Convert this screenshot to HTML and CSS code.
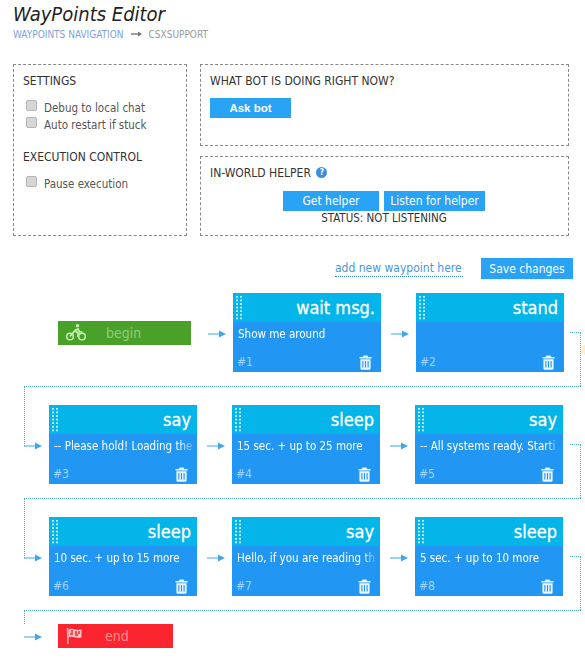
FILE: index.html
```html
<!DOCTYPE html>
<html lang="en">
<head>
    <meta charset="UTF-8">
    <title>WayPoints Editor</title>
    <link rel="stylesheet" href="styles.css">
</head>
<body>
    <svg class="defs" width="0" height="0">
        <symbol id="trash" viewBox="0 0 14 16">
            <path d="M5 0.500h4l1 1.500h3.500v1.800h-13v-1.800h3.500z" fill="currentColor"/>
            <path d="M1.500 4.500h11v10a1.200 1.200 0 0 1-1.200 1.200h-8.600a1.200 1.200 0 0 1-1.200-1.200z" fill="currentColor"/>
            <path d="M4.200 6.500v7M7 6.500v7M9.800 6.500v7" stroke="#2196f3" stroke-width="1.200"/>
        </symbol>
        <symbol id="arr" viewBox="0 0 18 8">
            <path d="M0 4h13" stroke="#7cc4ee" stroke-width="1.500"/>
            <path d="M11 0.500l7 3.500-7 3.500z" fill="#45a8e6"/>
        </symbol>
    </svg>

    <h1 class="title">WayPoints Editor</h1>
    <div class="crumbs">
        <a class="crumb-link">WAYPOINTS NAVIGATION</a>
        <svg class="crumb-arrow" width="11" height="6" viewBox="0 0 11 6"><path d="M0 3h8" stroke="#777" stroke-width="1.400"/><path d="M7 0.500l4 2.500-4 2.500z" fill="#777"/></svg>
        <span>CSXSUPPORT</span>
    </div>

    <div class="panels">
        <div class="panel panel-left">
            <h3>SETTINGS</h3>
            <label class="check"><input type="checkbox"> Debug to local chat</label>
            <label class="check"><input type="checkbox"> Auto restart if stuck</label>
            <h3 class="second">EXECUTION CONTROL</h3>
            <label class="check"><input type="checkbox"> Pause execution</label>
        </div>
        <div class="panel-col">
            <div class="panel panel-ask">
                <h3>WHAT BOT IS DOING RIGHT NOW?</h3>
                <button class="btn btn-ask">Ask bot</button>
            </div>
            <div class="panel panel-helper">
                <h3>IN-WORLD HELPER <span class="help">?</span></h3>
                <div class="helper-btns">
                    <button class="btn btn-get">Get helper</button>
                    <button class="btn btn-listen">Listen for helper</button>
                </div>
                <div class="status">STATUS: NOT LISTENING</div>
            </div>
        </div>
    </div>

    <div class="toolbar">
        <a class="add-link">add new waypoint here</a>
        <button class="btn btn-save">Save changes</button>
    </div>

    <div class="flow">
        <div class="row row-first">
            <div class="cap cap-begin">
                <svg class="cap-icon" width="20" height="17" viewBox="0 0 20 17" fill="none" stroke="#c5f0b0">
                    <circle cx="4" cy="12.500" r="3.300" stroke-width="1.500"/>
                    <circle cx="16" cy="12.500" r="3.300" stroke-width="1.500"/>
                    <circle cx="11.500" cy="1.800" r="1.700" fill="#c5f0b0" stroke="none"/>
                    <path d="M4 12.500l5-6 3-1.500 1.500 3h3M9 6.500l3 2.500v4" stroke-width="1.700"/>
                </svg>
                <span class="cap-text">begin</span>
            </div>
            <svg class="arrow" width="18" height="8"><use href="#arr"/></svg>
            <div class="node">
                <div class="node-head"><span class="grip"></span>wait msg.</div>
                <div class="node-body">Show me around</div>
                <div class="node-foot"><span>#1</span><svg class="trash" width="13" height="15"><use href="#trash"/></svg></div>
            </div>
            <svg class="arrow" width="18" height="8"><use href="#arr"/></svg>
            <div class="node">
                <div class="node-head"><span class="grip"></span>stand</div>
                <div class="node-body"></div>
                <div class="node-foot"><span>#2</span><svg class="trash" width="13" height="15"><use href="#trash"/></svg></div>
            </div>
            <span class="exit"></span>
            <span class="glow"></span>
        </div>

        <div class="row">
            <span class="turn"></span>
            <svg class="arrow" width="18" height="8"><use href="#arr"/></svg>
            <div class="node">
                <div class="node-head"><span class="grip"></span>say</div>
                <div class="node-body">-- Please hold! Loading the</div>
                <div class="node-foot"><span>#3</span><svg class="trash" width="13" height="15"><use href="#trash"/></svg></div>
            </div>
            <svg class="arrow" width="18" height="8"><use href="#arr"/></svg>
            <div class="node">
                <div class="node-head"><span class="grip"></span>sleep</div>
                <div class="node-body">15 sec. + up to 25 more</div>
                <div class="node-foot"><span>#4</span><svg class="trash" width="13" height="15"><use href="#trash"/></svg></div>
            </div>
            <svg class="arrow" width="18" height="8"><use href="#arr"/></svg>
            <div class="node">
                <div class="node-head"><span class="grip"></span>say</div>
                <div class="node-body">-- All systems ready. Starti</div>
                <div class="node-foot"><span>#5</span><svg class="trash" width="13" height="15"><use href="#trash"/></svg></div>
            </div>
            <span class="exit"></span>
        </div>

        <div class="row">
            <span class="turn"></span>
            <svg class="arrow" width="18" height="8"><use href="#arr"/></svg>
            <div class="node">
                <div class="node-head"><span class="grip"></span>sleep</div>
                <div class="node-body">10 sec. + up to 15 more</div>
                <div class="node-foot"><span>#6</span><svg class="trash" width="13" height="15"><use href="#trash"/></svg></div>
            </div>
            <svg class="arrow" width="18" height="8"><use href="#arr"/></svg>
            <div class="node">
                <div class="node-head"><span class="grip"></span>say</div>
                <div class="node-body">Hello, if you are reading th</div>
                <div class="node-foot"><span>#7</span><svg class="trash" width="13" height="15"><use href="#trash"/></svg></div>
            </div>
            <svg class="arrow" width="18" height="8"><use href="#arr"/></svg>
            <div class="node">
                <div class="node-head"><span class="grip"></span>sleep</div>
                <div class="node-body">5 sec. + up to 10 more</div>
                <div class="node-foot"><span>#8</span><svg class="trash" width="13" height="15"><use href="#trash"/></svg></div>
            </div>
            <span class="exit"></span>
        </div>

        <div class="row row-end">
            <span class="turn turn-end"></span>
            <svg class="arrow" width="18" height="8"><use href="#arr"/></svg>
            <div class="cap cap-end">
                <svg class="cap-icon" width="18" height="18" viewBox="0 0 18 18">
                    <path d="M1.500 1l0.500 16" stroke="#ffb3b6" stroke-width="1.500"/>
                    <path d="M2.500 2.500c4-2 6 1.500 13 0v8c-6 1.500-9-2-13 0z" fill="#ffc4c6"/>
                    <path d="M6 3v3M10 4v3M13 4v3M4 7h3M9 8h3" stroke="#fb2530" stroke-width="1.500"/>
                </svg>
                <span class="cap-text">end</span>
            </div>
        </div>
    </div>
</body>
</html>
```

FILE: styles.css
```css
body{
    margin: 0;
    padding: 0 12px 0 13px;
    width: 560px;
    font-family: "DejaVu Sans Condensed", "DejaVu Sans", sans-serif;
    font-size: 12px;
    color: #444;
    background-color: #fff;
}
.defs{
    position: absolute;
}
.title{
    margin: 0;
    padding-top: 2px;
    font-size: 20px;
    line-height: 25px;
    font-weight: normal;
    font-style: italic;
    color: #222;
}
.crumbs{
    display: flex;
    align-items: center;
    gap: 7px;
    height: 14px;
    font-size: 10px;
    color: #999;
}
.crumb-link{
    color: #7d9fdc;
}

/* top panels */
.panels{
    display: flex;
    gap: 13px;
    margin-top: 23px;
}
.panel{
    border: 1px dashed #888;
    box-sizing: border-box;
    padding: 9px;
}
.panel h3{
    margin: 0;
    font-size: 12px;
    line-height: 15px;
    font-weight: normal;
    color: #333;
}
.panel-left{
    width: 174px;
    height: 172px;
}
.panel-left h3{
    margin-bottom: 10px;
}
.panel-left .second{
    margin-top: 17px;
}
.panel-col{
    display: flex;
    flex-direction: column;
    gap: 10px;
    width: 369px;
}
.panel-ask{
    height: 82px;
}
.panel-helper{
    height: 80px;
}
.check{
    display: flex;
    align-items: center;
    gap: 7px;
    height: 17px;
    padding-left: 3px;
    font-size: 11.5px;
    color: #555;
}
.check input{
    appearance: none;
    box-sizing: border-box;
    width: 11px;
    height: 11px;
    margin: 0;
    position: relative;
    top: -2px;
    border: 1px solid #b5b5b5;
    border-radius: 2px;
    background-color: #d6d6d6;
}
.btn{
    border: 0;
    padding: 0;
    height: 20px;
    background-color: #29a3f5;
    color: #fff;
    font-family: "DejaVu Sans Condensed", "DejaVu Sans", sans-serif;
    font-size: 12px;
}
.btn-ask{
    display: block;
    width: 81px;
    margin-top: 9px;
    font-family: "Liberation Sans", sans-serif;
    font-size: 11.5px;
    font-weight: bold;
}
.help{
    display: inline-block;
    width: 11px;
    height: 11px;
    margin-left: 2px;
    border-radius: 50%;
    background-color: #3d8fdc;
    color: #fff;
    font-size: 8px;
    font-weight: bold;
    line-height: 11px;
    text-align: center;
    vertical-align: 2px;
}
.helper-btns{
    display: flex;
    justify-content: center;
    gap: 5px;
    margin-top: 10px;
    padding-right: 1px;
}
.btn-get{
    width: 96px;
}
.btn-listen{
    width: 101px;
}
.status{
    padding-right: 1px;
    font-size: 11.5px;
    line-height: 15px;
    text-align: center;
    color: #333;
}

/* toolbar */
.toolbar{
    display: flex;
    justify-content: flex-end;
    align-items: center;
    gap: 18px;
    margin-top: 22px;
    height: 21px;
}
.add-link{
    border-bottom: 1px dotted #2b7fc9;
    padding-bottom: 1px;
    width: 128px;
    color: #4a96dc;
}
.btn-save{
    width: 92px;
    height: 21px;
}

/* flow */
.flow{
    margin-top: 14px;
}
.row{
    position: relative;
    display: flex;
    align-items: center;
    height: 79px;
    margin: 0 0 33px 11px;
}
.row-first{
    margin-left: 45px;
}
.row-end{
    height: 24px;
    margin-top: -5px;
    margin-bottom: 0;
}
.cap{
    display: flex;
    align-items: center;
    flex: none;
    height: 24px;
    box-sizing: border-box;
    padding-left: 8px;
    font-size: 14px;
}
.cap-begin{
    width: 133px;
    margin-right: 7px;
    background-color: #4aa12a;
}
.cap-begin .cap-text{
    margin-left: 20px;
    color: #8fcf7a;
}
.cap-end{
    width: 115px;
    margin-left: 9px;
    background-color: #fb2530;
}
.cap-end .cap-text{
    margin-left: 21px;
    color: #ff8d8f;
}
.arrow{
    flex: none;
    margin: 2px 7px 0 10px;
}
.turn + .arrow{
    margin-left: 0;
}
.node{
    flex: none;
    width: 148px;
    height: 79px;
    overflow: hidden;
    background-color: #2196f3;
    color: #fff;
}
.node-head{
    position: relative;
    height: 29px;
    padding-right: 6px;
    background-color: #03b5e8;
    font-size: 18px;
    line-height: 30px;
    text-align: right;
    -webkit-text-stroke: 0.3px #fff;
}
.grip{
    position: absolute;
    left: 2px;
    top: 2px;
    width: 8px;
    height: 25px;
    background-image: radial-gradient(circle, #c4f1fd 1.2px, transparent 1.400px);
    background-size: 4px 3.600px;
}
.node-body{
    height: 30px;
    padding: 4px 0 0 5px;
    box-sizing: border-box;
    white-space: nowrap;
    overflow: hidden;
    font-size: 11.5px;
    line-height: 16px;
    -webkit-mask-image: linear-gradient(to right, #000 88%, transparent 100%);
    mask-image: linear-gradient(to right, #000 88%, transparent 100%);
}
.node-foot{
    display: flex;
    justify-content: space-between;
    align-items: center;
    padding: 0 9px 0 4px;
    height: 20px;
    color: #a0d5f9;
    font-size: 12px;
}
.trash{
    color: #eaf6ff;
}

/* dotted connectors between rows */
.exit{
    position: absolute;
    top: 39px;
    left: 546px;
    width: 10px;
    height: 53px;
    border-top: 1px dotted #4aa3d8;
    border-right: 1px dotted #4aa3d8;
}
.row-first .exit{
    left: 512px;
}
.turn{
    position: absolute;
    top: -19px;
    left: 0;
    width: 556px;
    height: 59px;
    border-top: 1px dotted #4aa3d8;
    border-left: 1px dotted #4aa3d8;
}
.turn-end{
    top: -14px;
    height: 13px;
}
.glow{
    position: absolute;
    top: 52px;
    left: 524px;
    width: 3px;
    height: 10px;
    border-radius: 5px 0 0 5px;
    background-color: #fdeccb;
}
```
